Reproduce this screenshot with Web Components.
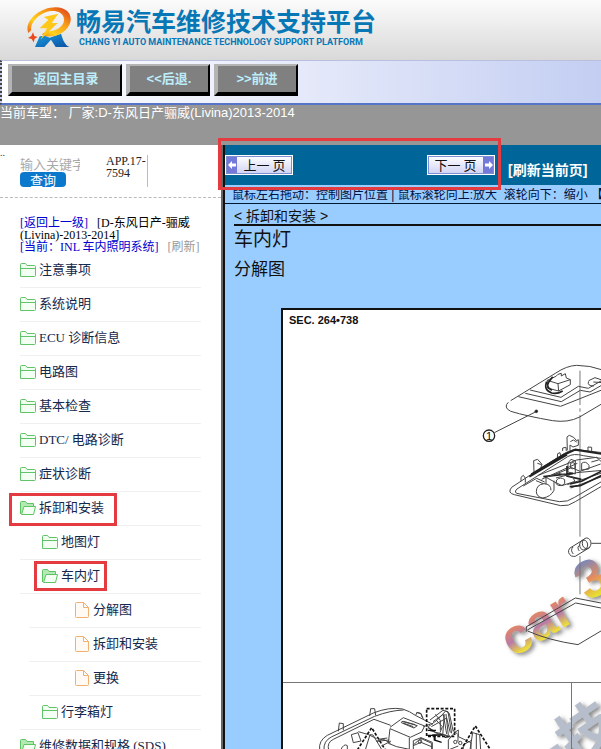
<!DOCTYPE html>
<html lang="zh-CN">
<head>
<meta charset="utf-8">
<title>畅易汽车维修技术支持平台</title>
<style>
html,body{height:100%}
body{margin:0;background:#fff;font-family:"Liberation Sans","Noto Sans CJK SC",sans-serif}
</style>
</head>
<body>
<repair-app></repair-app>
<script>
const define = (name, html, setup) => customElements.define(name, class extends HTMLElement {
  constructor(){
    super();
    this.attachShadow({mode:'open'}).innerHTML = html.trim().replace('</style>\n','</style>');
  }
  connectedCallback(){ if(setup) setup(this, this.shadowRoot); }
});

define('brand-logo', `
<style>:host{display:block;width:48px;height:44px;flex:none}svg{display:block}</style>
<svg width="48" height="44" viewBox="0 0 144 132" aria-hidden="true">
  <defs>
    <linearGradient id="g" x1="0" y1="1" x2="1" y2="0"><stop offset="0" stop-color="#e8481c"/><stop offset=".35" stop-color="#ffd21a"/><stop offset=".65" stop-color="#f89a18"/><stop offset="1" stop-color="#d8331c"/></linearGradient>
    <linearGradient id="b" x1="0" y1="0" x2="1" y2="1"><stop offset="0" stop-color="#1b9fe0"/><stop offset="1" stop-color="#0a4fa4"/></linearGradient>
  </defs>
  <path d="M44 94L30 126H58L78 104L92 126H134Q122 122 114 104L108 86L74 98L60 92Z" fill="url(#b)"/>
  <path fill-rule="evenodd" d="M10 84C-4 52 40 7 92 7C126 8 142 28 136 52C128 80 96 98 62 94L50 88L62 80C92 80 116 66 117 46C118 24 98 17 78 18C44 22 14 54 19 76Z" fill="url(#g)"/>
  <path d="M56 36L100 26L80 54H98L46 104L66 70H44L70 44Z" fill="#ffc818"/>
  <path d="M24 82L28 93L38 96L29 101L26 112L20 102L9 99L19 93Z" fill="#e8481c"/>
</svg>`);

define('site-header', `
<style>
:host{display:flex;align-items:center;box-sizing:border-box;height:60px;padding:0 0 6px 25px;gap:3px;background:linear-gradient(#fbfbfb,#d9d9d9);color:#0877b5;flex:none}
.t{display:flex;flex-direction:column;white-space:nowrap}
h1{margin:0;font:bold 25px/30px "Noto Sans CJK SC",sans-serif}
p{margin:0;padding-left:3px;font:bold 9px/14px Roboto,"Liberation Sans",sans-serif}
</style>
<brand-logo></brand-logo>
<div class="t"><h1>畅易汽车维修技术支持平台</h1><p>CHANG YI AUTO MAINTENANCE TECHNOLOGY SUPPORT PLATFORM</p></div>`);

define('nav-button', `
<style>
:host{display:block}
button{display:block;box-sizing:border-box;height:32px;width:84px;margin:0;padding:0;background:#808080;border:solid;border-width:2px 2px 4px 4px;border-color:#b4b4b4 #000 #000 #b4b4b4;color:#bdecfa;font:bold 13px/16px "Liberation Sans","Noto Sans CJK SC",sans-serif}
:host([wide]) button{width:114px}
</style><button type="button"><slot></slot></button>`);

define('nav-bar', `
<style>
:host{display:flex;box-sizing:border-box;height:45px;padding:3px 0 0 6px;gap:4px;flex:none;border-top:1px solid #b9bfdc;border-left:2px dotted #444;border-bottom:2px solid #5674c8;background:linear-gradient(90deg,#fff,#eceffb 40%,#c3cef2)}
</style>
<nav-button wide>返回主目录</nav-button><nav-button>&lt;&lt;后退.</nav-button><nav-button>&gt;&gt;前进</nav-button>`);

define('model-bar', `
<style>:host{display:block;box-sizing:border-box;height:40px;background:#969696;color:#fff;font-size:13px;line-height:16px;white-space:pre;flex:none}</style><slot></slot>`);

const icons = {
  closed:'<svg width="16" height="14" viewBox="0 0 16 14" fill="#f4fff4" stroke="#62c468" stroke-width="1"><path d="M.5 13.500V1.500Q.5 .5 1.500 .5H5.500L7 2.500H14.500Q15.500 2.500 15.500 3.500V12.500Q15.500 13.500 14.500 13.500ZM.5 5.500H15.500"/></svg>',
  open:'<svg width="16" height="14" viewBox="0 0 16 14" fill="#f2fff2" stroke="#5cc463" stroke-width="1"><path fill="#b4e8b4" d="M.5 13V1.500Q.5 .5 1.500 .5H5.500L7 2.500H13.500V5"/><path d="M1.500 13.500L4 5.500H15.500L13.500 13.500Z"/></svg>',
  file:'<svg width="14" height="16" viewBox="0 0 14 16" fill="#fffaf4" stroke="#f0b070" stroke-width="1"><path d="M.5 1.500Q.5 .5 1.500 .5H8.500L13.500 5.500V14.500Q13.500 15.500 12.500 15.500H1.500Q.5 15.500 .5 14.500ZM8.500 .5V5.500H13.500"/></svg>'
};
define('tree-row', `
<style>
:host{display:block;height:34px;box-sizing:border-box;border-bottom:1px solid #eef0f2;margin-right:20px}
:host([level="2"]) a{padding-left:22px}
:host([level="3"]){margin-left:9px}
:host([level="3"]) a{padding-left:46px}
a{display:flex;align-items:center;gap:3px;height:32px;color:#14284b;text-decoration:none;font:13px/18px "Liberation Serif","Noto Sans CJK SC",serif;white-space:nowrap}
:host([level="3"]) a{gap:4px}
.w{display:flex;align-items:center;gap:inherit;position:relative}
svg{display:block}
:host([marked]) .w::after{content:"";position:absolute;inset:-6px -13px -9px -11px;border:3px solid #e33b3f}
:host([marked][level="2"]) .w::after{inset:-6px -7px -6px -8px}
</style><a href="#"><span class="w"><span class="i"></span><span><slot></slot></span></span></a>`,
(el,root)=>{ root.querySelector('.i').innerHTML = icons[el.getAttribute('icon')||'closed']; });

define('search-box', `
<style>
:host{display:flex;flex:none;height:42px;padding:10px 0 0 20px;font:12px/12px "Liberation Serif",serif;color:#222;border-bottom:1px dashed #bbb;background:linear-gradient(#bbb,#bbb) 147px 10px/1px 32px no-repeat}
form{display:flex;flex-direction:column;align-items:flex-start;width:86px}
input{box-sizing:border-box;width:60px;height:17px;margin:0;border:0;padding:0;background:none;font:13px/17px "Noto Sans CJK SC",sans-serif}
input::placeholder{color:#aaa;opacity:1}
button{width:46px;height:15px;margin:0;border:0;padding:0;border-radius:4px;background:#0b78cc;color:#fff;font:13px/14px "Noto Sans CJK SC",sans-serif}
p{margin:0;width:41px}
</style>
<form><input type="text" aria-label="关键字" placeholder="输入关键字"><button type="button">查询</button></form><p>APP.17-<br>7594</p>`);

define('bread-crumb', `
<style>
:host{display:block;flex:none;padding:19px 0 1px 20px;font:12px/12px "Liberation Serif","Noto Sans CJK SC",serif;color:#000;white-space:pre}
a{color:#0000d0;text-decoration:none}.r{color:#999}
</style><a href="#">[返回上一级]</a>   [D-东风日产-骊威<br>(Livina)-2013-2014]<br><a href="#">[当前：INL 车内照明系统]</a>   <a class="r" href="#">[刷新]</a>`);

define('side-panel', `
<style>
:host{display:flex;width:221px;flex:none;flex-direction:column;overflow:hidden;background:#fff;position:relative}
.d{position:absolute;left:0;top:5px;font:10px/6px "Liberation Serif",serif;color:#333}
nav{flex:none;padding:0 0 0 20px}
</style>
<span class="d">..</span>
<search-box></search-box><bread-crumb></bread-crumb>
<nav>
<tree-row>注意事项</tree-row><tree-row>系统说明</tree-row><tree-row>ECU 诊断信息</tree-row><tree-row>电路图</tree-row><tree-row>基本检查</tree-row><tree-row>DTC/ 电路诊断</tree-row><tree-row>症状诊断</tree-row>
<tree-row icon="open" marked>拆卸和安装</tree-row>
<tree-row level="2">地图灯</tree-row><tree-row level="2" icon="open" marked>车内灯</tree-row>
<tree-row level="3" icon="file">分解图</tree-row><tree-row level="3" icon="file">拆卸和安装</tree-row><tree-row level="3" icon="file">更换</tree-row>
<tree-row level="2">行李箱灯</tree-row><tree-row icon="open">维修数据和规格 (SDS)</tree-row>
</nav>`);

define('pager-button', `
<style>
:host{display:block;flex:none}
button{display:flex;align-items:stretch;box-sizing:border-box;width:68px;height:20px;margin:0;padding:0;border:1px solid #fff;background:linear-gradient(#fff,#cfd2f4);color:#111;font:13px/17px "Noto Sans CJK SC",sans-serif;white-space:pre;outline:1px solid #7d8fd0;outline-offset:-2px}
:host([next]) button{flex-direction:row-reverse}
.a{width:11px;background:#7379d8;display:flex;align-items:center;justify-content:center}
:host([next]) svg{transform:scaleX(-1)}
.l{flex:1;text-align:center}
</style><button type="button"><span class="a"><svg width="8" height="8" viewBox="0 0 8 8"><path d="M0 4L4 0V2.500H8V5.500H4V8Z" fill="#fff"/></svg></span><span class="l"><slot></slot></span></button>`);

define('pager-bar', `
<style>
:host{display:flex;align-items:center;box-sizing:border-box;height:40px;background:#069;position:relative;white-space:nowrap;flex:none}
.g{flex:0 1 134px}
a{margin-left:13px;padding-top:10px;color:#fff;text-decoration:none;font:bold 14px/18px "Liberation Sans","Noto Sans CJK SC",sans-serif}
.m{position:absolute;z-index:2;left:-7px;top:-7px;width:283px;height:52px;box-sizing:border-box;border:3px solid #e33b3f;pointer-events:none}
</style><pager-button>上一 页</pager-button><span class="g"></span><pager-button next>下一 页</pager-button><a href="#">[刷新当前页]</a><span class="m"></span>`);

define('exploded-figure', `
<style>:host{display:block;overflow:hidden;border:solid #111;border-width:2px 0 0 2px;background:#fff}svg{display:block}</style>
<svg width="318" height="439" viewBox="283 310 318 439" fill="none" stroke="#444" stroke-width="1" role="img" aria-label="车内灯分解图">
<defs>
<linearGradient id="w" x1="0" y1="0" x2="0" y2="1"><stop offset=".25" stop-color="#f08c50"/><stop offset=".55" stop-color="#b87aa8"/><stop offset=".78" stop-color="#ecdc3c"/></linearGradient>
<linearGradient id="v" x1="0" y1="0" x2="0" y2="1"><stop offset=".2" stop-color="#7c88b8"/><stop offset=".5" stop-color="#e48a60"/><stop offset=".8" stop-color="#e8e030"/></linearGradient>
<filter id="s" x="-20%" y="-20%" width="150%" height="150%"><feDropShadow dx="3" dy="2" stdDeviation="2" flood-color="#555" flood-opacity=".7"/></filter>
</defs>
<text x="289" y="324" fill="#111" stroke="none" font-family="Liberation Sans,sans-serif" font-weight="bold" font-size="11">SEC. 264•738</text>
<g stroke="none" font-family="Liberation Sans,sans-serif" font-weight="bold" filter="url(#s)">
<text transform="translate(513 658) rotate(-31)" font-size="50" fill="url(#w)">car</text>
<text transform="translate(588 602) rotate(-31)" font-size="54" fill="url(#v)">3</text>
<text transform="translate(527 795) rotate(-34)" font-family="Noto Sans CJK SC,sans-serif" font-size="56" fill="#b7becb">一技</text>
</g>
<path d="M283 682.500H601M571.500 683V749" stroke="#777"/>
<g transform="translate(400 350) scale(.3333)" stroke-width="3">
  <path d="M540 62V165M540 175V185M540 195V560" stroke="#777"/>
  <path d="M332 152L466 70Q500 47 530 46Q570 46 608 60M325 157Q309 172 332 184Q382 199 458 212Q504 219 539 201L608 160"/>
  <path d="M390 120L483 142L535 109L565 115L608 90M376 130L484 155L541 121L570 126L608 104M355 140L482 169L608 119M566 92L585 83L603 89M566 94Q560 108 582 108M580 96L608 98"/>
  <path d="M442 91L468 79L474 73L484 70V78L496 71L499 84L511 89V104L476 123L442 114ZM442 91L474 101L511 89M474 101L476 123"/>
  <path d="M440 95Q430 120 455 129Q471 133 488 123M446 96Q437 113 456 121M458 80L445 98" stroke="#222" stroke-width="5"/>
  <circle cx="267" cy="257" r="17" stroke="#222" stroke-width="4"/><path d="M283 248L408 185"/><circle cx="409" cy="184" r="4" fill="#111"/>
  <path d="M335 412L388 377L494 310Q519 294 548 301L608 308M335 412Q321 429 343 434L482 467Q506 470 526 455L608 407M351 417L503 320Q521 309 550 317L608 326M351 417Q338 430 360 432L478 455Q503 457 524 442L608 393"/>
  <path d="M363 394V382L370 376L376 384V398M402 367L401 332L413 328L426 343L420 361M412 340L425 344M472 325L473 311L480 308L483 322M488 303V294L498 292L499 303M502 301L501 261L508 256L521 262L530 272L535 269V286L519 291L510 285V300M511 275L520 270L530 276M564 304V291L575 292V305" />
  <path d="M394 373L490 315L526 299L608 312M388 380L501 314M410 365L429 355" stroke="#222" stroke-width="6"/>
  <path d="M370 408L410 385L434 396M408 392L430 401M415 376L530 330L590 322L604 335M425 388L532 340M458 376L515 353L540 364L602 342M468 384L530 368L608 361M504 339V366L526 372V333L513 328ZM512 340Q519 335 525 341V354Q518 359 512 354ZM545 340Q557 331 567 346V357L545 360ZM574 336L596 330M502 404L608 368M512 414L608 379" />
  <path d="M510 402L545 394L605 363M509 410L541 407L608 375M430 380L520 370M501 348V378L544 388" stroke="#222" stroke-width="5"/>
  <path d="M438 382V403M462 392V421Q452 441 428 444Q410 441 409 425Q409 404 432 401Q453 402 453 421M438 382L476 370L518 381L525 394L486 407L464 396ZM470 390Q481 379 494 389V401Q480 413 468 401Z"/>
  <path d="M509 595L552 568M526 619L570 592"/><ellipse cx="560" cy="580" rx="13" ry="16"/><ellipse cx="551" cy="585" rx="12" ry="15"/><path d="M574 580H608M540 584Q529 592 538 603M509 595Q500 608 514 618Q522 620 526 619M519 591Q510 601 520 612"/>
</g>
<text x="486" y="440" fill="#111" stroke="none" font-family="Liberation Sans,sans-serif" font-size="11">1</text>
<g transform="translate(400 530) scale(.3333)" stroke-width="3">
  <path d="M540 78V193" stroke="#777"/>
  <path d="M378 291L526 204L608 220M382 300L527 219L608 235M379 291V305M383 303Q445 331 534 344L608 300"/>
</g>
<g transform="translate(220 640) scale(.3333)" stroke-width="3">
  <path d="M299 330Q295 302 322 286L460 219Q508 200 548 207Q570 214 586 226L638 253M312 330Q310 303 334 291L464 229Q512 211 551 210M355 274L358 249L370 251V271M449 228L452 206L464 206L467 226M587 226L591 217L602 220L610 236M326 330Q320 308 340 298L462 238L512 256M394 284L414 278L423 303L400 308ZM415 275Q448 282 470 296M362 330Q372 309 382 317L382 330"/>
  <path d="M510 262L550 233L614 258L605 276L571 292L510 266L505 310L530 320L568 328V293M546 244L592 257L582 264L544 248ZM580 302L603 293L637 307V328M580 302V330M603 293V307L580 317M603 307L637 321M475 298L502 294M470 304L508 300M625 260L653 239L677 213L688 220L700 275M634 260L680 234L691 278M650 242L667 260L660 278M630 272L680 286M610 260L630 253M673 223L668 288M678 222L685 285M700 270L714 284V305"/>
  <path d="M412 330L455 263L496 330M620 206H704V289H620Z" stroke="#111" stroke-width="5" stroke-dasharray="9 5"/>
  <path d="M436 330L450 284L459 285L486 330M470 304L489 297L512 310M550 244L586 254M549 249L580 260M485 318L513 303"/>
  <path d="M622 286H650M626 264L644 275M643 286V300L665 307M674 292L690 289" stroke="#111" stroke-width="4"/>
</g>
<g transform="translate(400 530) scale(.3333)" stroke-width="3">
  <path d="M90 570L129 541L144 545L155 610M99 575L130 553L140 612M106 553L121 571V601M82 590L109 610L152 620M145 630L165 607L175 600V620L213 638V660M40 645L62 625L95 640V660M145 630V660L175 648M190 660V644L215 631M210 660L218 608L239 614L242 660M229 610V660M50 548L63 551L68 565"/>
  <circle cx="60" cy="635" r="5"/><circle cx="166" cy="636" r="5"/><circle cx="181" cy="639" r="5"/>
  <path d="M183 660L226 588L272 660" stroke="#111" stroke-width="5" stroke-dasharray="9 5"/>
  <path d="M84 601H108M97 615H127M105 618V630" stroke="#111" stroke-width="4"/>
</g>
</svg>`);

define('page-viewer', `
<style>
:host{display:flex;flex:1;min-width:0;flex-direction:column;border-left:2px solid #111;box-shadow:-2px 0 0 #666;background:#9cf;color:#111}
.hint{box-sizing:border-box;height:19px;flex:none;border-bottom:1px solid #001830;padding:0 0 0 7px;font-size:12px;line-height:21px;white-space:pre;overflow:hidden;color:#001040}
.doc{flex:1;min-height:0;overflow:hidden;padding:4px 0 0 9px;font-family:"Liberation Sans","Noto Sans CJK SC",sans-serif}
.sec{border-bottom:2px solid #111;font-size:14px;line-height:16px}
h2,h3{margin:0;font-weight:normal;white-space:nowrap}
h2{font-size:19px;line-height:28px}h3{font-size:17px;line-height:32px}
exploded-figure{margin:22px 0 0 47px}
</style>
<pager-bar></pager-bar>
<div class="hint">鼠标左右拖动：控制图片位置 | 鼠标滚轮向上:放大  滚轮向下：缩小 【</div>
<div class="doc"><div class="sec">&lt; 拆卸和安装 &gt;</div><h2>车内灯</h2><h3>分解图</h3><exploded-figure></exploded-figure></div>`);

define('repair-app', `
<style>:host{display:flex;flex-direction:column;height:100vh;overflow:hidden}main{display:flex;flex:1;min-height:0;gap:2px}</style>
<site-header></site-header><nav-bar></nav-bar><model-bar>当前车型： 厂家:D-东风日产骊威(Livina)2013-2014</model-bar>
<main><side-panel></side-panel><page-viewer></page-viewer></main>`);
</script>
</body>
</html>
